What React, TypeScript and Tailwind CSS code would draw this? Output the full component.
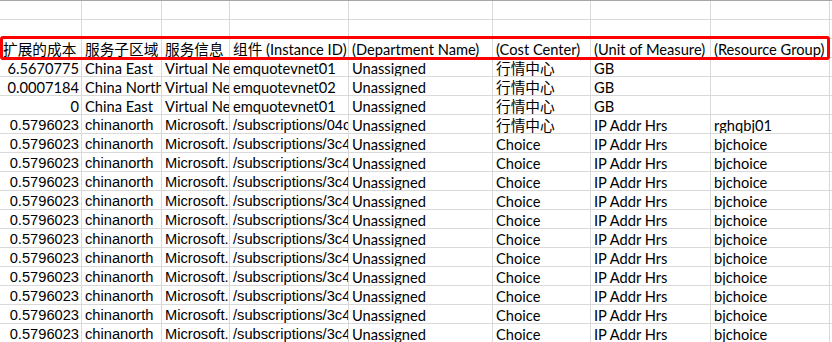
import React from "react";

const widths = [82, 80, 68, 119, 144, 98, 120, 119, 2];

type Cell = { t: string; right?: boolean; arial?: boolean };

const Y = "font-['Lato','Noto_Sans_CJK_SC',sans-serif]";
const A = "font-['Liberation_Sans','Noto_Sans_CJK_SC',sans-serif]";

const header: Cell[] = [
  { t: "扩展的成本" },
  { t: "服务子区域" },
  { t: "服务信息" },
  { t: "组件 (Instance ID)" },
  { t: "(Department Name)" },
  { t: "(Cost Center)" },
  { t: "(Unit of Measure)" },
  { t: "(Resource Group)" },
  { t: "" },
];

const first: Cell[][] = [
  [
    { t: "6.5670775", right: true },
    { t: "China East" },
    { t: "Virtual Network" },
    { t: "emquotevnet01" },
    { t: "Unassigned" },
    { t: "行情中心" },
    { t: "GB" },
    { t: "" },
    { t: "" },
  ],
  [
    { t: "0.0007184", right: true },
    { t: "China North" },
    { t: "Virtual Network" },
    { t: "emquotevnet02" },
    { t: "Unassigned" },
    { t: "行情中心" },
    { t: "GB" },
    { t: "" },
    { t: "" },
  ],
  [
    { t: "0", right: true },
    { t: "China East" },
    { t: "Virtual Network" },
    { t: "emquotevnet01" },
    { t: "Unassigned" },
    { t: "行情中心" },
    { t: "GB" },
    { t: "" },
    { t: "" },
  ],
  [
    { t: "0.5796023", right: true, arial: true },
    { t: "chinanorth", arial: true },
    { t: "Microsoft.", arial: true },
    { t: "/subscriptions/04c1b2e3", arial: true },
    { t: "Unassigned" },
    { t: "行情中心" },
    { t: "IP Addr Hrs" },
    { t: "rghqbj01" },
    { t: "" },
  ],
];

const choiceRow: Cell[] = [
  { t: "0.5796023", right: true, arial: true },
  { t: "chinanorth", arial: true },
  { t: "Microsoft.", arial: true },
  { t: "/subscriptions/3c4a5d6e", arial: true },
  { t: "Unassigned" },
  { t: "Choice" },
  { t: "IP Addr Hrs" },
  { t: "bjchoice" },
  { t: "" },
];

const blank: Cell[] = widths.map(() => ({ t: "" }));

const rows: Cell[][] = [
  blank,
  blank,
  header,
  ...first,
  ...Array.from({ length: 11 }, () => choiceRow),
];

function Row({ cells }: { cells: Cell[] }) {
  return (
    <div className="flex h-[19px] border-b border-[#d9d9d9]">
      {cells.map((c, i) => (
        <div
          key={i}
          style={{ width: widths[i] }}
          className={`shrink-0 overflow-hidden whitespace-nowrap border-r border-[#d9d9d9] pt-[3px] text-[14.67px] leading-[15px] text-black ${
            c.arial ? A : Y
          } ${c.right ? "text-right pr-[2px]" : "pl-[3px]"}`}
        >
          {c.t}
        </div>
      ))}
    </div>
  );
}

export default function App() {
  return (
    <div className="relative h-[342px] w-[832px] overflow-hidden bg-white">
      <div className="border-t border-[#a6a6a6]">
        {rows.map((r, i) => (
          <Row key={i} cells={r} />
        ))}
      </div>
      <div className="pointer-events-none absolute left-0 top-[36px] h-[24px] w-[830px] rounded-[3px] border-[3px] border-[#ff0000]" />
    </div>
  );
}
